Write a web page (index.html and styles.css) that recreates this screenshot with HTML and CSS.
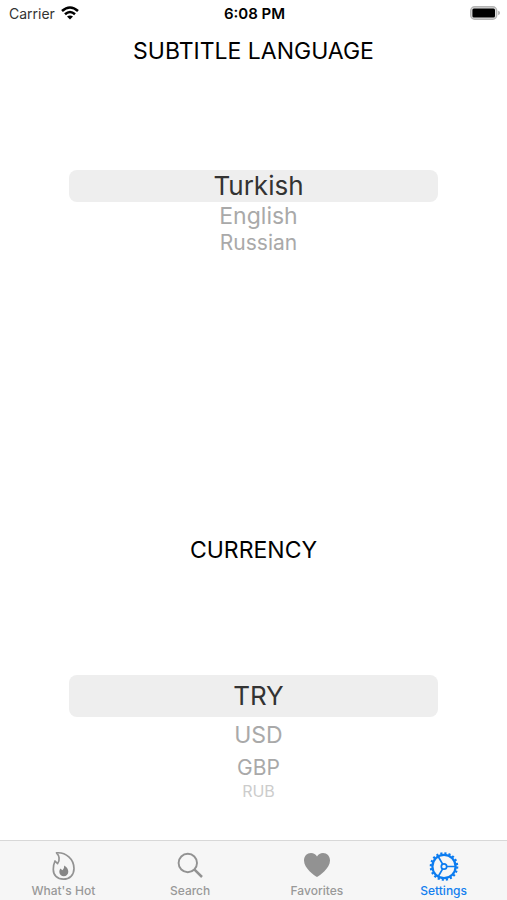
FILE: index.html
```html
<!DOCTYPE html>
<html lang="en">
<head>
<meta charset="utf-8">
<meta name="viewport" content="width=device-width, initial-scale=1">
<title>Settings</title>
<link rel="stylesheet" href="styles.css">
</head>
<body>
<header class="status">
  <div class="carrier">
    <span>Carrier</span>
    <svg width="18" height="14" viewBox="0 0 18 14" fill="none" stroke="#000" stroke-width="2.6">
      <path d="M1 5Q9-2 17 5"/>
      <path d="M4 8.2Q9 3.8 14 8.2"/>
      <path d="M9 13.6L6 10.6Q9 8.2 12 10.6Z" fill="#000" stroke="none"/>
    </svg>
  </div>
  <time class="clock">6:08 PM</time>
  <svg class="battery" width="30" height="14" viewBox="0 0 30 14">
    <rect x="0.7" y="0.7" width="26" height="12.6" rx="4" fill="#ddd" stroke="#b4b4b4" stroke-width="1.4"/>
    <rect x="2.4" y="2.4" width="22.6" height="9.2" rx="1.5" fill="#000"/>
    <path d="M28.2 4.8Q30 5.4 30 7T28.2 9.2Z" fill="#aaa"/>
  </svg>
</header>
<main class="settings">
  <section class="group">
    <h1 class="title" id="language">SUBTITLE LANGUAGE</h1>
    <div class="wheel wheel-compact" role="listbox" aria-labelledby="language">
      <button class="item selected" role="option" aria-selected="true">Turkish</button>
      <button class="item near" role="option" aria-selected="false">English</button>
      <button class="item far" role="option" aria-selected="false">Russian</button>
    </div>
  </section>
  <section class="group">
    <h1 class="title" id="currency">CURRENCY</h1>
    <div class="wheel wheel-tall" role="listbox" aria-labelledby="currency">
      <button class="item selected" role="option" aria-selected="true">TRY</button>
      <button class="item near" role="option" aria-selected="false">USD</button>
      <button class="item far" role="option" aria-selected="false">GBP</button>
      <button class="item edge" role="option" aria-selected="false">RUB</button>
    </div>
  </section>
</main>
<nav class="tabs">
  <a class="tab" href="#hot">
    <svg width="30" height="30" viewBox="0 0 30 30">
      <path d="M8.500 1.800C18 1 26 8 26 17.500C26 24 21.500 28.200 15.500 28.200C9 28.200 5.300 24 5.300 18.500C5.300 15.500 5.800 12.500 7 10L9.600 12.600C12.200 9 11.300 4.500 8.500 1.800Z" fill="none" stroke="#929292" stroke-width="1.700" stroke-linejoin="round"/>
      <path d="M16 14.500C19 16 20.300 18.200 20.300 20.800A4.500 4.500 0 0 1 11.300 20.800C11.300 19.500 11.700 18.500 12.500 17.600L14.300 19.200C15.800 18 16.500 16.300 16 14.500Z" fill="#868686"/>
    </svg>
    <span>What's Hot</span>
  </a>
  <a class="tab" href="#search">
    <svg width="30" height="30" viewBox="0 0 30 30" fill="none" stroke="#929292">
      <circle cx="12.800" cy="12" r="9.200" stroke-width="1.900"/>
      <path d="M19.500 18.700L27 26" stroke-width="2.500"/>
    </svg>
    <span>Search</span>
  </a>
  <a class="tab" href="#favorites">
    <svg width="30" height="30" viewBox="0 0 30 30">
      <path d="M15 26C12.500 24.500 2 17.500 2 9.500C2 5 5 2 9 2C11.600 2 13.800 3.300 15 5.400C16.200 3.300 18.400 2 21 2C25 2 28 5 28 9.500C28 17.500 17.500 24.500 15 26Z" fill="#929292"/>
    </svg>
    <span>Favorites</span>
  </a>
  <a class="tab active" href="#settings" aria-current="page">
    <svg width="30" height="30" viewBox="0 0 30 30" fill="none" stroke="#0c7cf0">
      <circle cx="15" cy="15.500" r="13.200" stroke-width="2.200" stroke-dasharray="2.147 2"/>
      <circle cx="15" cy="15.500" r="11.600" stroke-width="2.200"/>
      <circle cx="15" cy="15.500" r="2.700" stroke-width="1.700"/>
      <path d="M17.700 15.500H26.500M13.650 13.160L9.200 5.500M13.650 17.840L9.200 25.500" stroke-width="1.700"/>
    </svg>
    <span>Settings</span>
  </a>
</nav>
</body>
</html>
```
FILE: styles.css
```css
* {
  box-sizing: border-box;
}

body {
  display: flex;
  flex-direction: column;
  min-height: 100vh;
  margin: 0;
  background: #fff;
  color: #000;
  font-family: Inter, "Liberation Sans", sans-serif;
}

.status {
  display: grid;
  grid-template-columns: 1fr auto 1fr;
  align-items: center;
  height: 26px;
  padding: 0 7px 0 9px;
  font-size: 14px;
}

.carrier {
  display: flex;
  align-items: center;
  gap: 6px;
  color: #333;
}

.clock {
  font-size: 15px;
  font-weight: 600;
}

.battery {
  justify-self: end;
}

.settings {
  display: flex;
  flex: 1;
  flex-direction: column;
  justify-content: space-between;
}

.title {
  margin: 0;
  font-size: 23px;
  font-weight: 400;
  line-height: 50px;
  text-align: center;
}

.wheel {
  display: flex;
  flex-direction: column;
  margin: 0 69px;
}

.wheel-compact {
  padding: 94px 0;
}

.wheel-tall {
  padding: 100px 0 41px;
}

.item {
  width: 100%;
  padding: 0 0 0 10px;
  border: 0;
  background: none;
  color: #a9a9a9;
  font-family: inherit;
  font-size: 23px;
  line-height: 28px;
  text-align: center;
}

.selected {
  border-radius: 8px;
  background: #eee;
  color: #333;
  font-size: 26px;
  line-height: 32px;
}

.far {
  font-size: 21px;
  line-height: 26px;
}

.wheel-tall .selected {
  line-height: 42px;
}

.wheel-tall .near {
  line-height: 36px;
}

.wheel-tall .far {
  line-height: 30px;
}

.edge {
  color: #ccc;
  font-size: 16px;
  line-height: 16px;
}

.tabs {
  display: grid;
  grid-template-columns: repeat(4, 1fr);
  height: 60px;
  border-top: 1px solid #d8d8d8;
  background: #f6f6f6;
}

.tab {
  display: flex;
  flex-direction: column;
  align-items: center;
  padding-top: 10px;
  color: #999;
  font-size: 12px;
  font-weight: 500;
  line-height: 20px;
  text-decoration: none;
}

.active {
  color: #1480ef;
}
```
